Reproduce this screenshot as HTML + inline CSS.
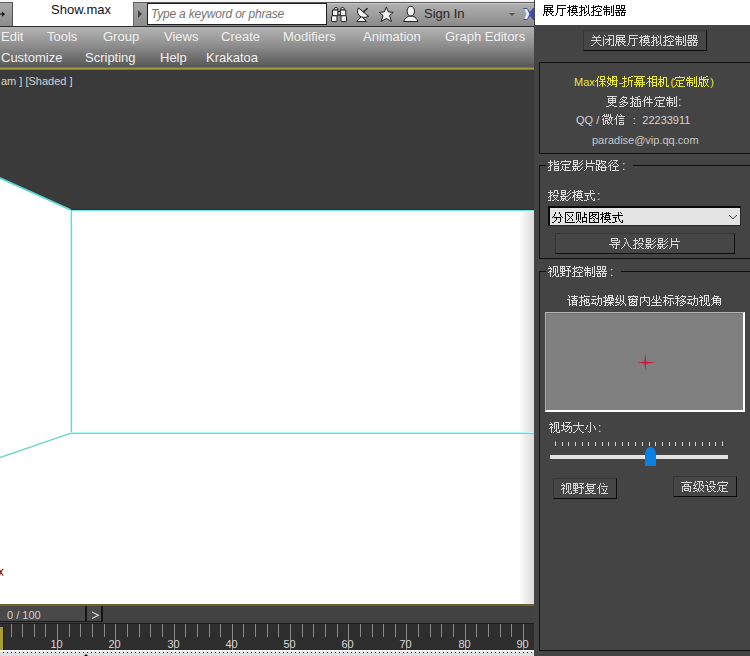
<!DOCTYPE html>
<html><head><meta charset="utf-8">
<style>
*{margin:0;padding:0;box-sizing:border-box}
html,body{width:750px;height:656px;overflow:hidden;background:#444;font-family:"Liberation Sans",sans-serif}
.a{position:absolute}
.mi{position:absolute;color:#f0f0f0;font-size:13px;white-space:nowrap;line-height:15px}
.t{position:absolute;white-space:nowrap;line-height:14px}
.btn{position:absolute;background:#464646;border-top:1px solid #363636;border-left:1px solid #363636;border-right:1px solid #0c0c0c;border-bottom:1px solid #0c0c0c;color:#d8d8d8;font-size:12px;text-align:center;white-space:nowrap}
.grp{position:absolute;border:1px solid #101010;border-right:none}
.gl{position:absolute;background:#444;color:#dedede;font-size:12px;padding:0 8px 0 2px;line-height:14px;white-space:nowrap}
.cj{display:inline-block;vertical-align:-3px;fill:currentColor;shape-rendering:crispEdges}
</style></head><body>
<!-- ===== top bar ===== -->
<div class="a" style="left:0;top:0;width:535px;height:3px;background:#f4f4f4"></div>
<div class="a" style="left:0;top:2px;width:535px;height:24px;background:linear-gradient(#b2b2b2,#8a8a8a);border-top:1px solid #5a5a5a;box-shadow:inset 0 1px 0 #cacaca"></div>
<div class="a" style="left:0;top:26px;width:535px;height:1px;background:#2b2b2b"></div>
<!-- left small button -->
<div class="a" style="left:0;top:2px;width:13px;height:24px;background:linear-gradient(#a8a8a8,#8c8c8c);border-right:1px solid #505050;border-top:1px solid #606060"></div>
<svg class="a" style="left:0;top:11px" width="8" height="8"><path d="M0 3 H2" stroke="#111" stroke-width="1.2"/><path d="M2 0.6 L5 3.2 L2 5.8 Z" fill="#111"/></svg>
<!-- tab -->
<div class="a" style="left:13px;top:0;width:120px;height:26px;background:#fff"></div>
<div class="t" style="left:51px;top:3px;font-size:13px;color:#111">Show.max</div>
<div class="a" style="left:133px;top:2px;width:14px;height:24px;background:linear-gradient(#a4a4a4,#8c8c8c);border-left:1px solid #6a6a6a;border-top:1px solid #5a5a5a"></div>
<div class="a" style="left:138px;top:10px;width:0;height:0;border-left:4px solid #444;border-top:4px solid transparent;border-bottom:4px solid transparent"></div>
<!-- search -->
<div class="a" style="left:147px;top:3px;width:180px;height:22px;background:#fff;border:1px solid #1e1e1e"></div>
<div class="t" style="left:151px;top:7px;font-size:12px;font-style:italic;color:#747474;letter-spacing:-0.2px">Type a keyword or phrase</div>
<!-- icons -->
<svg class="a" style="left:330px;top:5px" width="92" height="18" viewBox="0 0 92 18">
 <g fill="#f2f2f2" stroke="#1e1e1e" stroke-width="1" stroke-linejoin="round">
  <path d="M4.3 5 L4.3 3.2 Q6 1.6 7.7 3.2 L7.7 5 Z"/>
  <path d="M10.8 5 L10.8 3.2 Q12.5 1.6 14.2 3.2 L14.2 5 Z"/>
  <rect x="2.5" y="5" width="5.5" height="5.8"/>
  <rect x="10.3" y="5" width="5.5" height="5.8"/>
  <rect x="8" y="6.5" width="2.3" height="3.5"/>
  <rect x="1.5" y="10.8" width="5.5" height="5.8" rx="0.6"/>
  <rect x="11" y="10.8" width="5.5" height="5.8" rx="0.6"/>
  <path d="M26.8 16.6 L31.6 11.2 L36.6 16.6 Z"/>
  <path d="M28.6 3 C25 8.5 30.5 15 38.6 11.4 Z"/>
  <line x1="33" y1="7.3" x2="37.6" y2="3.2" stroke-width="1.3"/>
  <path d="M56.3 1.9 L58.3 6.9 L63.3 7.3 L59.5 10.6 L61.5 16.5 L56.3 13.4 L51.1 16.5 L53.1 10.6 L49.3 7.3 L54.3 6.9 Z"/>
  <ellipse cx="80.8" cy="6.2" rx="3.7" ry="5"/>
  <path d="M73.6 16.5 C74.3 14 76.3 12.3 78.8 11.2 L82.8 11.2 C85.3 12.3 87.3 14 88 16.5 Z"/>
 </g>
</svg>
<div class="t" style="left:424px;top:7px;font-size:13px;color:#262626">Sign In</div>
<div class="a" style="left:509px;top:13px;width:0;height:0;border-top:3px solid #555;border-left:3px solid transparent;border-right:3px solid transparent"></div>
<svg class="a" style="left:523px;top:8px" width="12" height="12" viewBox="0 0 12 12">
 <path d="M0 0 L4 0 L7 4 L10 0 L12 0 L12 12 L10 12 L7 8 L4 12 L0 12 L4 6 Z" fill="#3a4fa8"/>
 <path d="M1 1 L4 1 L6.5 6 L4 11 L1 11 L3.5 6 Z" fill="#e8ecff"/>
</svg>

<!-- ===== menu bar ===== -->
<div class="a" style="left:0;top:27px;width:535px;height:41px;background:linear-gradient(#b4b4b4,#8e8e8e 45%,#545454)">
<span class="mi" style="left:1px;top:2px">Edit</span>
<span class="mi" style="left:47px;top:2px">Tools</span>
<span class="mi" style="left:103px;top:2px">Group</span>
<span class="mi" style="left:164px;top:2px">Views</span>
<span class="mi" style="left:221px;top:2px">Create</span>
<span class="mi" style="left:283px;top:2px">Modifiers</span>
<span class="mi" style="left:363px;top:2px">Animation</span>
<span class="mi" style="left:445px;top:2px">Graph Editors</span>
<span class="mi" style="left:1px;top:23px">Customize</span>
<span class="mi" style="left:85px;top:23px">Scripting</span>
<span class="mi" style="left:160px;top:23px">Help</span>
<span class="mi" style="left:206px;top:23px">Krakatoa</span>
</div>
<div class="a" style="left:0;top:67px;width:535px;height:3px;background:linear-gradient(#6c6430,#a39a3a 45%,#a39a3a 55%,#6e6630)"></div>

<!-- ===== viewport ===== -->
<div class="a" style="left:0;top:70px;width:535px;height:534px;background:#3a3a3a;overflow:hidden">
<svg width="535" height="534" style="position:absolute;left:0;top:0">
<defs><linearGradient id="rg" x1="0" x2="1" y1="0" y2="0"><stop offset="0.97" stop-color="#fff"/><stop offset="1" stop-color="#d8d8d8"/></linearGradient></defs>
<polygon points="0,107.5 71,139.5 535,139.5 535,534 0,534" fill="url(#rg)"/>
<line x1="0" y1="108" x2="71" y2="140" stroke="#50d8d4" stroke-width="1.6"/>
<line x1="0" y1="387.6" x2="71" y2="363.2" stroke="#70d4cc" stroke-width="1.4"/>
<rect x="71" y="139" width="464" height="1" fill="#243232"/>
<rect x="71" y="140" width="464" height="1" fill="#7ae6e4"/>
<rect x="71" y="141" width="464" height="1" fill="#c6fcfc"/>
<rect x="70" y="140" width="1" height="223" fill="#b4fcfc"/>
<rect x="71" y="140" width="1" height="224" fill="#70d2ca"/>
<rect x="71" y="362" width="464" height="1" fill="#b4fcfc"/>
<rect x="71" y="363" width="464" height="1" fill="#70d2ca"/>
</svg>
<div class="t" style="left:1px;top:4px;font-size:11px;color:#d4d4d4">am ] [Shaded ]</div>
<svg class="a" style="left:0;top:498px" width="5" height="9"><path d="M3.2 0.8 L0.8 4.2 L3.2 7.6 M0 2 L0.8 4.2 L0 6.4" fill="none" stroke="#9a1a1a" stroke-width="1.1"/></svg>
</div>

<!-- ===== timeline ===== -->
<div class="a" style="left:0;top:604px;width:535px;height:2px;background:#6a6228"></div>
<div class="a" style="left:0;top:606px;width:535px;height:18px;background:#424242"></div><div class="a" style="left:0;top:623px;width:535px;height:1px;background:#1c1c1c"></div>
<div class="a" style="left:0;top:606px;width:87px;height:16px;background:#494949;border-right:2px solid #151515;border-bottom:1px solid #151515"></div>
<div class="t" style="left:7px;top:608px;font-size:11px;color:#d0d0d0">0 / 100</div>
<div class="a" style="left:87px;top:606px;width:16px;height:16px;background:#4a4a4a;border-right:2px solid #151515;border-bottom:1px solid #151515"></div>
<svg class="a" style="left:91px;top:611px" width="9" height="9"><path d="M1 1 L7.5 4.2 L1 7.5" fill="none" stroke="#d8d8d8" stroke-width="1.1"/></svg>
<div class="a" style="left:0;top:624px;width:535px;height:26px;background:#2e2e2e"></div>
<div class="a" style="left:0;top:627px;width:3px;height:23px;background:#a89b32"></div><div class="a" style="left:3px;top:627px;width:1px;height:23px;background:#1a1a1a"></div>
<svg class="a" style="left:0;top:624px" width="535" height="27"><line x1="11.5" y1="0" x2="11.5" y2="13" stroke="#8a8a8a" stroke-width="1"/><line x1="22.5" y1="0" x2="22.5" y2="13" stroke="#8a8a8a" stroke-width="1"/><line x1="34.5" y1="0" x2="34.5" y2="13" stroke="#8a8a8a" stroke-width="1"/><line x1="45.5" y1="0" x2="45.5" y2="13" stroke="#8a8a8a" stroke-width="1"/><line x1="57.5" y1="0" x2="57.5" y2="27" stroke="#8a8a8a" stroke-width="1"/><text x="56.5" y="24" font-size="11" fill="#d8d8d8" text-anchor="middle" font-family="Liberation Sans">10</text><line x1="69.5" y1="0" x2="69.5" y2="13" stroke="#8a8a8a" stroke-width="1"/><line x1="80.5" y1="0" x2="80.5" y2="13" stroke="#8a8a8a" stroke-width="1"/><line x1="92.5" y1="0" x2="92.5" y2="13" stroke="#8a8a8a" stroke-width="1"/><line x1="104.5" y1="0" x2="104.5" y2="13" stroke="#8a8a8a" stroke-width="1"/><line x1="115.5" y1="0" x2="115.5" y2="27" stroke="#8a8a8a" stroke-width="1"/><text x="114.5" y="24" font-size="11" fill="#d8d8d8" text-anchor="middle" font-family="Liberation Sans">20</text><line x1="127.5" y1="0" x2="127.5" y2="13" stroke="#8a8a8a" stroke-width="1"/><line x1="139.5" y1="0" x2="139.5" y2="13" stroke="#8a8a8a" stroke-width="1"/><line x1="150.5" y1="0" x2="150.5" y2="13" stroke="#8a8a8a" stroke-width="1"/><line x1="162.5" y1="0" x2="162.5" y2="13" stroke="#8a8a8a" stroke-width="1"/><line x1="174.5" y1="0" x2="174.5" y2="27" stroke="#8a8a8a" stroke-width="1"/><text x="173.5" y="24" font-size="11" fill="#d8d8d8" text-anchor="middle" font-family="Liberation Sans">30</text><line x1="185.5" y1="0" x2="185.5" y2="13" stroke="#8a8a8a" stroke-width="1"/><line x1="197.5" y1="0" x2="197.5" y2="13" stroke="#8a8a8a" stroke-width="1"/><line x1="209.5" y1="0" x2="209.5" y2="13" stroke="#8a8a8a" stroke-width="1"/><line x1="220.5" y1="0" x2="220.5" y2="13" stroke="#8a8a8a" stroke-width="1"/><line x1="232.5" y1="0" x2="232.5" y2="27" stroke="#8a8a8a" stroke-width="1"/><text x="231.5" y="24" font-size="11" fill="#d8d8d8" text-anchor="middle" font-family="Liberation Sans">40</text><line x1="243.5" y1="0" x2="243.5" y2="13" stroke="#8a8a8a" stroke-width="1"/><line x1="255.5" y1="0" x2="255.5" y2="13" stroke="#8a8a8a" stroke-width="1"/><line x1="267.5" y1="0" x2="267.5" y2="13" stroke="#8a8a8a" stroke-width="1"/><line x1="278.5" y1="0" x2="278.5" y2="13" stroke="#8a8a8a" stroke-width="1"/><line x1="290.5" y1="0" x2="290.5" y2="27" stroke="#8a8a8a" stroke-width="1"/><text x="289.5" y="24" font-size="11" fill="#d8d8d8" text-anchor="middle" font-family="Liberation Sans">50</text><line x1="302.5" y1="0" x2="302.5" y2="13" stroke="#8a8a8a" stroke-width="1"/><line x1="313.5" y1="0" x2="313.5" y2="13" stroke="#8a8a8a" stroke-width="1"/><line x1="325.5" y1="0" x2="325.5" y2="13" stroke="#8a8a8a" stroke-width="1"/><line x1="337.5" y1="0" x2="337.5" y2="13" stroke="#8a8a8a" stroke-width="1"/><line x1="348.5" y1="0" x2="348.5" y2="27" stroke="#8a8a8a" stroke-width="1"/><text x="347.5" y="24" font-size="11" fill="#d8d8d8" text-anchor="middle" font-family="Liberation Sans">60</text><line x1="360.5" y1="0" x2="360.5" y2="13" stroke="#8a8a8a" stroke-width="1"/><line x1="372.5" y1="0" x2="372.5" y2="13" stroke="#8a8a8a" stroke-width="1"/><line x1="383.5" y1="0" x2="383.5" y2="13" stroke="#8a8a8a" stroke-width="1"/><line x1="395.5" y1="0" x2="395.5" y2="13" stroke="#8a8a8a" stroke-width="1"/><line x1="406.5" y1="0" x2="406.5" y2="27" stroke="#8a8a8a" stroke-width="1"/><text x="405.5" y="24" font-size="11" fill="#d8d8d8" text-anchor="middle" font-family="Liberation Sans">70</text><line x1="418.5" y1="0" x2="418.5" y2="13" stroke="#8a8a8a" stroke-width="1"/><line x1="430.5" y1="0" x2="430.5" y2="13" stroke="#8a8a8a" stroke-width="1"/><line x1="441.5" y1="0" x2="441.5" y2="13" stroke="#8a8a8a" stroke-width="1"/><line x1="453.5" y1="0" x2="453.5" y2="13" stroke="#8a8a8a" stroke-width="1"/><line x1="465.5" y1="0" x2="465.5" y2="27" stroke="#8a8a8a" stroke-width="1"/><text x="464.5" y="24" font-size="11" fill="#d8d8d8" text-anchor="middle" font-family="Liberation Sans">80</text><line x1="476.5" y1="0" x2="476.5" y2="13" stroke="#8a8a8a" stroke-width="1"/><line x1="488.5" y1="0" x2="488.5" y2="13" stroke="#8a8a8a" stroke-width="1"/><line x1="500.5" y1="0" x2="500.5" y2="13" stroke="#8a8a8a" stroke-width="1"/><line x1="511.5" y1="0" x2="511.5" y2="13" stroke="#8a8a8a" stroke-width="1"/><line x1="523.5" y1="0" x2="523.5" y2="27" stroke="#8a8a8a" stroke-width="1"/><text x="522.5" y="24" font-size="11" fill="#d8d8d8" text-anchor="middle" font-family="Liberation Sans">90</text><line x1="535.5" y1="0" x2="535.5" y2="13" stroke="#8a8a8a" stroke-width="1"/></svg>
<div class="a" style="left:0;top:650px;width:535px;height:6px;background:#dedede"></div>
<div class="a" style="left:0;top:650px;width:535px;height:2px;background:#f4f4f4"></div>
<div class="a" style="left:3px;top:652px;width:532px;height:1px;background:repeating-linear-gradient(90deg,#222 0 1px,transparent 1px 4px)"></div>

<div class="a" style="left:84px;top:654px;width:0;height:0;border-bottom:2px solid #111;border-left:2px solid transparent;border-right:2px solid transparent"></div>
<!-- ===== right panel ===== -->
<div class="a" style="left:534px;top:0;width:216px;height:656px;background:#444444">
<div class="a" style="left:1px;top:0;width:215px;height:25px;background:#fff"></div>
<div class="t" style="left:9px;top:4px;font-size:12px;color:#111"><svg class="cj" width="84" height="13"><path d="M1 0h9v1h-9zM1 1h1v1h-1zM9 1h1v1h-1zM1 2h9v1h-9zM1 3h1v1h-1zM4 3h1v1h-1zM7 3h1v1h-1zM1 4h9v1h-9zM1 5h1v1h-1zM4 5h1v1h-1zM7 5h1v1h-1zM1 6h10v1h-10zM1 7h1v1h-1zM3 7h1v1h-1zM6 7h1v1h-1zM9 7h1v1h-1zM1 8h1v1h-1zM3 8h1v1h-1zM7 8h2v1h-2zM0 9h1v1h-1zM3 9h1v1h-1zM5 9h1v1h-1zM8 9h1v1h-1zM0 10h1v1h-1zM3 10h2v1h-2zM9 10h2v1h-2zM14 0h9v1h-9zM14 1h1v1h-1zM14 2h1v1h-1zM14 3h9v1h-9zM14 4h1v1h-1zM19 4h1v1h-1zM14 5h1v1h-1zM19 5h1v1h-1zM14 6h1v1h-1zM19 6h1v1h-1zM14 7h1v1h-1zM19 7h1v1h-1zM13 8h1v1h-1zM19 8h1v1h-1zM13 9h1v1h-1zM19 9h1v1h-1zM12 10h1v1h-1zM17 10h3v1h-3zM26 0h1v1h-1zM30 0h1v1h-1zM32 0h1v1h-1zM26 1h1v1h-1zM28 1h7v1h-7zM24 2h4v1h-4zM30 2h1v1h-1zM32 2h1v1h-1zM26 3h1v1h-1zM29 3h5v1h-5zM26 4h2v1h-2zM29 4h1v1h-1zM33 4h1v1h-1zM25 5h2v1h-2zM28 5h6v1h-6zM25 6h2v1h-2zM29 6h1v1h-1zM33 6h1v1h-1zM24 7h1v1h-1zM26 7h1v1h-1zM28 7h7v1h-7zM26 8h1v1h-1zM31 8h1v1h-1zM26 9h1v1h-1zM30 9h1v1h-1zM32 9h1v1h-1zM26 10h1v1h-1zM28 10h2v1h-2zM33 10h2v1h-2zM38 0h1v1h-1zM42 0h1v1h-1zM45 0h1v1h-1zM38 1h1v1h-1zM43 1h1v1h-1zM45 1h1v1h-1zM36 2h6v1h-6zM43 2h1v1h-1zM45 2h1v1h-1zM38 3h1v1h-1zM41 3h1v1h-1zM45 3h1v1h-1zM38 4h1v1h-1zM40 4h2v1h-2zM45 4h1v1h-1zM38 5h2v1h-2zM41 5h1v1h-1zM45 5h1v1h-1zM37 6h2v1h-2zM41 6h1v1h-1zM43 6h1v1h-1zM45 6h1v1h-1zM36 7h1v1h-1zM38 7h1v1h-1zM41 7h2v1h-2zM45 7h1v1h-1zM38 8h1v1h-1zM41 8h1v1h-1zM44 8h2v1h-2zM38 9h1v1h-1zM43 9h1v1h-1zM46 9h1v1h-1zM36 10h3v1h-3zM41 10h2v1h-2zM46 10h1v1h-1zM50 0h1v1h-1zM55 0h1v1h-1zM50 1h1v1h-1zM52 1h7v1h-7zM48 2h5v1h-5zM58 2h1v1h-1zM50 3h1v1h-1zM54 3h1v1h-1zM56 3h1v1h-1zM50 4h1v1h-1zM53 4h1v1h-1zM57 4h1v1h-1zM50 5h3v1h-3zM58 5h1v1h-1zM49 6h2v1h-2zM53 6h5v1h-5zM48 7h1v1h-1zM50 7h1v1h-1zM55 7h1v1h-1zM50 8h1v1h-1zM55 8h1v1h-1zM50 9h1v1h-1zM55 9h1v1h-1zM48 10h3v1h-3zM52 10h7v1h-7zM63 0h1v1h-1zM70 0h1v1h-1zM61 1h1v1h-1zM63 1h1v1h-1zM68 1h1v1h-1zM70 1h1v1h-1zM61 2h6v1h-6zM68 2h1v1h-1zM70 2h1v1h-1zM60 3h1v1h-1zM63 3h1v1h-1zM68 3h1v1h-1zM70 3h1v1h-1zM60 4h7v1h-7zM68 4h1v1h-1zM70 4h1v1h-1zM63 5h1v1h-1zM68 5h1v1h-1zM70 5h1v1h-1zM61 6h6v1h-6zM68 6h1v1h-1zM70 6h1v1h-1zM61 7h1v1h-1zM63 7h1v1h-1zM66 7h1v1h-1zM68 7h1v1h-1zM70 7h1v1h-1zM61 8h1v1h-1zM63 8h1v1h-1zM66 8h1v1h-1zM70 8h1v1h-1zM61 9h1v1h-1zM63 9h1v1h-1zM65 9h2v1h-2zM70 9h1v1h-1zM63 10h1v1h-1zM68 10h3v1h-3zM73 0h4v1h-4zM78 0h4v1h-4zM73 1h1v1h-1zM76 1h1v1h-1zM78 1h1v1h-1zM81 1h1v1h-1zM73 2h1v1h-1zM76 2h1v1h-1zM78 2h1v1h-1zM81 2h1v1h-1zM73 3h4v1h-4zM78 3h4v1h-4zM77 4h1v1h-1zM80 4h1v1h-1zM72 5h11v1h-11zM75 6h1v1h-1zM79 6h1v1h-1zM72 7h5v1h-5zM78 7h5v1h-5zM73 8h1v1h-1zM76 8h1v1h-1zM78 8h1v1h-1zM81 8h1v1h-1zM73 9h1v1h-1zM76 9h1v1h-1zM78 9h1v1h-1zM81 9h1v1h-1zM73 10h4v1h-4zM78 10h4v1h-4z"/></svg></div>
</div>
<div class="btn" style="left:583px;top:30px;width:124px;height:21px;line-height:20px"><svg class="cj" width="108" height="13"><path d="M2 0h1v1h-1zM8 0h1v1h-1zM3 1h1v1h-1zM7 1h1v1h-1zM1 2h9v1h-9zM5 3h1v1h-1zM5 4h1v1h-1zM0 5h10v1h-10zM5 6h1v1h-1zM4 7h1v1h-1zM6 7h1v1h-1zM3 8h1v1h-1zM7 8h1v1h-1zM2 9h1v1h-1zM8 9h1v1h-1zM0 10h2v1h-2zM9 10h2v1h-2zM13 0h1v1h-1zM17 0h6v1h-6zM14 1h1v1h-1zM22 1h1v1h-1zM12 2h1v1h-1zM18 2h1v1h-1zM22 2h1v1h-1zM12 3h1v1h-1zM18 3h1v1h-1zM22 3h1v1h-1zM12 4h1v1h-1zM14 4h7v1h-7zM22 4h1v1h-1zM12 5h1v1h-1zM17 5h2v1h-2zM22 5h1v1h-1zM12 6h1v1h-1zM16 6h1v1h-1zM18 6h1v1h-1zM22 6h1v1h-1zM12 7h1v1h-1zM15 7h1v1h-1zM18 7h1v1h-1zM22 7h1v1h-1zM12 8h1v1h-1zM14 8h1v1h-1zM18 8h1v1h-1zM22 8h1v1h-1zM12 9h1v1h-1zM17 9h2v1h-2zM22 9h1v1h-1zM12 10h1v1h-1zM20 10h3v1h-3zM25 0h9v1h-9zM25 1h1v1h-1zM33 1h1v1h-1zM25 2h9v1h-9zM25 3h1v1h-1zM28 3h1v1h-1zM31 3h1v1h-1zM25 4h9v1h-9zM25 5h1v1h-1zM28 5h1v1h-1zM31 5h1v1h-1zM25 6h10v1h-10zM25 7h1v1h-1zM27 7h1v1h-1zM30 7h1v1h-1zM33 7h1v1h-1zM25 8h1v1h-1zM27 8h1v1h-1zM31 8h2v1h-2zM24 9h1v1h-1zM27 9h1v1h-1zM29 9h1v1h-1zM32 9h1v1h-1zM24 10h1v1h-1zM27 10h2v1h-2zM33 10h2v1h-2zM38 0h9v1h-9zM38 1h1v1h-1zM38 2h1v1h-1zM38 3h9v1h-9zM38 4h1v1h-1zM43 4h1v1h-1zM38 5h1v1h-1zM43 5h1v1h-1zM38 6h1v1h-1zM43 6h1v1h-1zM38 7h1v1h-1zM43 7h1v1h-1zM37 8h1v1h-1zM43 8h1v1h-1zM37 9h1v1h-1zM43 9h1v1h-1zM36 10h1v1h-1zM41 10h3v1h-3zM50 0h1v1h-1zM54 0h1v1h-1zM56 0h1v1h-1zM50 1h1v1h-1zM52 1h7v1h-7zM48 2h4v1h-4zM54 2h1v1h-1zM56 2h1v1h-1zM50 3h1v1h-1zM53 3h5v1h-5zM50 4h2v1h-2zM53 4h1v1h-1zM57 4h1v1h-1zM49 5h2v1h-2zM52 5h6v1h-6zM49 6h2v1h-2zM53 6h1v1h-1zM57 6h1v1h-1zM48 7h1v1h-1zM50 7h1v1h-1zM52 7h7v1h-7zM50 8h1v1h-1zM55 8h1v1h-1zM50 9h1v1h-1zM54 9h1v1h-1zM56 9h1v1h-1zM50 10h1v1h-1zM52 10h2v1h-2zM57 10h2v1h-2zM62 0h1v1h-1zM66 0h1v1h-1zM69 0h1v1h-1zM62 1h1v1h-1zM67 1h1v1h-1zM69 1h1v1h-1zM60 2h6v1h-6zM67 2h1v1h-1zM69 2h1v1h-1zM62 3h1v1h-1zM65 3h1v1h-1zM69 3h1v1h-1zM62 4h1v1h-1zM64 4h2v1h-2zM69 4h1v1h-1zM62 5h2v1h-2zM65 5h1v1h-1zM69 5h1v1h-1zM61 6h2v1h-2zM65 6h1v1h-1zM67 6h1v1h-1zM69 6h1v1h-1zM60 7h1v1h-1zM62 7h1v1h-1zM65 7h2v1h-2zM69 7h1v1h-1zM62 8h1v1h-1zM65 8h1v1h-1zM68 8h2v1h-2zM62 9h1v1h-1zM67 9h1v1h-1zM70 9h1v1h-1zM60 10h3v1h-3zM65 10h2v1h-2zM70 10h1v1h-1zM74 0h1v1h-1zM79 0h1v1h-1zM74 1h1v1h-1zM76 1h7v1h-7zM72 2h5v1h-5zM82 2h1v1h-1zM74 3h1v1h-1zM78 3h1v1h-1zM80 3h1v1h-1zM74 4h1v1h-1zM77 4h1v1h-1zM81 4h1v1h-1zM74 5h3v1h-3zM82 5h1v1h-1zM73 6h2v1h-2zM77 6h5v1h-5zM72 7h1v1h-1zM74 7h1v1h-1zM79 7h1v1h-1zM74 8h1v1h-1zM79 8h1v1h-1zM74 9h1v1h-1zM79 9h1v1h-1zM72 10h3v1h-3zM76 10h7v1h-7zM87 0h1v1h-1zM94 0h1v1h-1zM85 1h1v1h-1zM87 1h1v1h-1zM92 1h1v1h-1zM94 1h1v1h-1zM85 2h6v1h-6zM92 2h1v1h-1zM94 2h1v1h-1zM84 3h1v1h-1zM87 3h1v1h-1zM92 3h1v1h-1zM94 3h1v1h-1zM84 4h7v1h-7zM92 4h1v1h-1zM94 4h1v1h-1zM87 5h1v1h-1zM92 5h1v1h-1zM94 5h1v1h-1zM85 6h6v1h-6zM92 6h1v1h-1zM94 6h1v1h-1zM85 7h1v1h-1zM87 7h1v1h-1zM90 7h1v1h-1zM92 7h1v1h-1zM94 7h1v1h-1zM85 8h1v1h-1zM87 8h1v1h-1zM90 8h1v1h-1zM94 8h1v1h-1zM85 9h1v1h-1zM87 9h1v1h-1zM89 9h2v1h-2zM94 9h1v1h-1zM87 10h1v1h-1zM92 10h3v1h-3zM97 0h4v1h-4zM102 0h4v1h-4zM97 1h1v1h-1zM100 1h1v1h-1zM102 1h1v1h-1zM105 1h1v1h-1zM97 2h1v1h-1zM100 2h1v1h-1zM102 2h1v1h-1zM105 2h1v1h-1zM97 3h4v1h-4zM102 3h4v1h-4zM101 4h1v1h-1zM104 4h1v1h-1zM96 5h11v1h-11zM99 6h1v1h-1zM103 6h1v1h-1zM96 7h5v1h-5zM102 7h5v1h-5zM97 8h1v1h-1zM100 8h1v1h-1zM102 8h1v1h-1zM105 8h1v1h-1zM97 9h1v1h-1zM100 9h1v1h-1zM102 9h1v1h-1zM105 9h1v1h-1zM97 10h4v1h-4zM102 10h4v1h-4z"/></svg></div>

<div class="grp" style="left:539px;top:62px;width:211px;height:92px"></div>
<div class="t" style="left:574px;top:75px;font-size:11px;color:#e8e83a">Max<svg class="cj" width="24" height="13"><path d="M3 0h1v1h-1zM5 0h5v1h-5zM3 1h1v1h-1zM5 1h1v1h-1zM9 1h1v1h-1zM2 2h1v1h-1zM5 2h1v1h-1zM9 2h1v1h-1zM2 3h1v1h-1zM5 3h5v1h-5zM1 4h2v1h-2zM7 4h1v1h-1zM0 5h1v1h-1zM2 5h1v1h-1zM4 5h7v1h-7zM2 6h1v1h-1zM7 6h1v1h-1zM2 7h1v1h-1zM6 7h3v1h-3zM2 8h1v1h-1zM5 8h1v1h-1zM7 8h1v1h-1zM9 8h1v1h-1zM2 9h1v1h-1zM4 9h1v1h-1zM7 9h1v1h-1zM10 9h1v1h-1zM2 10h1v1h-1zM7 10h1v1h-1zM13 0h1v1h-1zM17 0h5v1h-5zM13 1h1v1h-1zM17 1h2v1h-2zM21 1h1v1h-1zM12 2h4v1h-4zM17 2h1v1h-1zM19 2h1v1h-1zM21 2h1v1h-1zM13 3h1v1h-1zM15 3h1v1h-1zM17 3h1v1h-1zM21 3h1v1h-1zM13 4h1v1h-1zM15 4h8v1h-8zM12 5h1v1h-1zM15 5h1v1h-1zM17 5h2v1h-2zM21 5h1v1h-1zM12 6h1v1h-1zM15 6h1v1h-1zM17 6h1v1h-1zM19 6h1v1h-1zM21 6h1v1h-1zM13 7h2v1h-2zM17 7h1v1h-1zM21 7h1v1h-1zM14 8h2v1h-2zM17 8h5v1h-5zM13 9h1v1h-1zM16 9h1v1h-1zM21 9h1v1h-1zM12 10h1v1h-1zM20 10h2v1h-2z"/></svg>-<svg class="cj" width="48" height="13"><path d="M2 0h1v1h-1zM9 0h2v1h-2zM2 1h1v1h-1zM6 1h3v1h-3zM0 2h5v1h-5zM6 2h1v1h-1zM2 3h1v1h-1zM6 3h1v1h-1zM2 4h1v1h-1zM6 4h5v1h-5zM2 5h3v1h-3zM6 5h1v1h-1zM9 5h1v1h-1zM1 6h2v1h-2zM6 6h1v1h-1zM9 6h1v1h-1zM0 7h1v1h-1zM2 7h1v1h-1zM6 7h1v1h-1zM9 7h1v1h-1zM2 8h1v1h-1zM6 8h1v1h-1zM9 8h1v1h-1zM2 9h1v1h-1zM5 9h1v1h-1zM9 9h1v1h-1zM0 10h3v1h-3zM4 10h1v1h-1zM9 10h1v1h-1zM12 0h11v1h-11zM15 1h1v1h-1zM19 1h1v1h-1zM14 2h7v1h-7zM14 3h1v1h-1zM20 3h1v1h-1zM14 4h7v1h-7zM14 5h1v1h-1zM16 5h1v1h-1zM20 5h1v1h-1zM12 6h11v1h-11zM15 7h1v1h-1zM17 7h1v1h-1zM20 7h1v1h-1zM12 8h11v1h-11zM14 9h1v1h-1zM17 9h1v1h-1zM20 9h1v1h-1zM14 10h1v1h-1zM17 10h1v1h-1zM19 10h2v1h-2zM27 0h1v1h-1zM30 0h5v1h-5zM27 1h1v1h-1zM30 1h1v1h-1zM34 1h1v1h-1zM25 2h6v1h-6zM34 2h1v1h-1zM27 3h1v1h-1zM30 3h5v1h-5zM27 4h1v1h-1zM30 4h1v1h-1zM34 4h1v1h-1zM26 5h3v1h-3zM30 5h1v1h-1zM34 5h1v1h-1zM25 6h1v1h-1zM27 6h1v1h-1zM29 6h6v1h-6zM24 7h1v1h-1zM27 7h1v1h-1zM30 7h1v1h-1zM34 7h1v1h-1zM27 8h1v1h-1zM30 8h1v1h-1zM34 8h1v1h-1zM27 9h1v1h-1zM30 9h5v1h-5zM27 10h1v1h-1zM30 10h1v1h-1zM34 10h1v1h-1zM38 0h1v1h-1zM38 1h1v1h-1zM41 1h4v1h-4zM38 2h1v1h-1zM41 2h1v1h-1zM44 2h1v1h-1zM36 3h6v1h-6zM44 3h1v1h-1zM38 4h1v1h-1zM41 4h1v1h-1zM44 4h1v1h-1zM37 5h3v1h-3zM41 5h1v1h-1zM44 5h1v1h-1zM37 6h2v1h-2zM40 6h2v1h-2zM44 6h1v1h-1zM36 7h1v1h-1zM38 7h1v1h-1zM41 7h1v1h-1zM44 7h1v1h-1zM36 8h1v1h-1zM38 8h1v1h-1zM41 8h1v1h-1zM44 8h1v1h-1zM38 9h1v1h-1zM40 9h1v1h-1zM44 9h1v1h-1zM46 9h1v1h-1zM38 10h2v1h-2zM44 10h3v1h-3z"/></svg>(<svg class="cj" width="36" height="13"><path d="M5 0h1v1h-1zM1 1h10v1h-10zM1 2h1v1h-1zM10 2h1v1h-1zM0 3h1v1h-1zM9 3h1v1h-1zM2 4h8v1h-8zM5 5h1v1h-1zM2 6h1v1h-1zM5 6h1v1h-1zM2 7h1v1h-1zM5 7h4v1h-4zM2 8h1v1h-1zM5 8h1v1h-1zM1 9h1v1h-1zM3 9h1v1h-1zM5 9h1v1h-1zM0 10h1v1h-1zM4 10h7v1h-7zM15 0h1v1h-1zM22 0h1v1h-1zM13 1h1v1h-1zM15 1h1v1h-1zM20 1h1v1h-1zM22 1h1v1h-1zM13 2h6v1h-6zM20 2h1v1h-1zM22 2h1v1h-1zM12 3h1v1h-1zM15 3h1v1h-1zM20 3h1v1h-1zM22 3h1v1h-1zM12 4h7v1h-7zM20 4h1v1h-1zM22 4h1v1h-1zM15 5h1v1h-1zM20 5h1v1h-1zM22 5h1v1h-1zM13 6h6v1h-6zM20 6h1v1h-1zM22 6h1v1h-1zM13 7h1v1h-1zM15 7h1v1h-1zM18 7h1v1h-1zM20 7h1v1h-1zM22 7h1v1h-1zM13 8h1v1h-1zM15 8h1v1h-1zM18 8h1v1h-1zM22 8h1v1h-1zM13 9h1v1h-1zM15 9h1v1h-1zM17 9h2v1h-2zM22 9h1v1h-1zM15 10h1v1h-1zM20 10h3v1h-3zM27 0h1v1h-1zM32 0h2v1h-2zM25 1h1v1h-1zM27 1h1v1h-1zM29 1h3v1h-3zM25 2h1v1h-1zM27 2h1v1h-1zM29 2h1v1h-1zM25 3h10v1h-10zM25 4h1v1h-1zM29 4h2v1h-2zM33 4h1v1h-1zM25 5h1v1h-1zM29 5h1v1h-1zM31 5h1v1h-1zM33 5h1v1h-1zM25 6h3v1h-3zM29 6h1v1h-1zM31 6h1v1h-1zM33 6h1v1h-1zM25 7h1v1h-1zM27 7h1v1h-1zM29 7h1v1h-1zM32 7h1v1h-1zM25 8h1v1h-1zM27 8h1v1h-1zM29 8h1v1h-1zM32 8h1v1h-1zM24 9h1v1h-1zM27 9h1v1h-1zM29 9h1v1h-1zM31 9h1v1h-1zM33 9h1v1h-1zM24 10h1v1h-1zM27 10h2v1h-2zM30 10h1v1h-1zM34 10h1v1h-1z"/></svg>)</div>
<div class="t" style="left:606px;top:95px;font-size:12px;color:#dadada"><svg class="cj" width="72" height="13"><path d="M1 0h10v1h-10zM6 1h1v1h-1zM2 2h8v1h-8zM2 3h1v1h-1zM6 3h1v1h-1zM9 3h1v1h-1zM2 4h8v1h-8zM2 5h1v1h-1zM6 5h1v1h-1zM9 5h1v1h-1zM2 6h8v1h-8zM4 7h1v1h-1zM6 7h1v1h-1zM5 8h1v1h-1zM3 9h2v1h-2zM6 9h2v1h-2zM0 10h3v1h-3zM8 10h3v1h-3zM17 0h1v1h-1zM16 1h5v1h-5zM15 2h1v1h-1zM20 2h1v1h-1zM14 3h1v1h-1zM16 3h1v1h-1zM19 3h1v1h-1zM17 4h2v1h-2zM15 5h2v1h-2zM18 5h1v1h-1zM13 6h2v1h-2zM17 6h5v1h-5zM16 7h1v1h-1zM21 7h1v1h-1zM14 8h2v1h-2zM17 8h1v1h-1zM20 8h1v1h-1zM18 9h2v1h-2zM13 10h5v1h-5zM26 0h1v1h-1zM32 0h2v1h-2zM26 1h1v1h-1zM29 1h3v1h-3zM24 2h4v1h-4zM31 2h1v1h-1zM26 3h1v1h-1zM28 3h7v1h-7zM26 4h1v1h-1zM31 4h1v1h-1zM26 5h2v1h-2zM29 5h1v1h-1zM31 5h1v1h-1zM33 5h2v1h-2zM25 6h2v1h-2zM28 6h1v1h-1zM31 6h1v1h-1zM34 6h1v1h-1zM24 7h1v1h-1zM26 7h1v1h-1zM28 7h2v1h-2zM31 7h1v1h-1zM33 7h2v1h-2zM26 8h1v1h-1zM28 8h1v1h-1zM31 8h1v1h-1zM34 8h1v1h-1zM26 9h1v1h-1zM28 9h1v1h-1zM31 9h1v1h-1zM34 9h1v1h-1zM24 10h3v1h-3zM28 10h7v1h-7zM39 0h1v1h-1zM43 0h1v1h-1zM39 1h1v1h-1zM41 1h1v1h-1zM43 1h1v1h-1zM38 2h1v1h-1zM41 2h1v1h-1zM43 2h1v1h-1zM38 3h1v1h-1zM40 3h6v1h-6zM37 4h3v1h-3zM43 4h1v1h-1zM36 5h1v1h-1zM38 5h1v1h-1zM43 5h1v1h-1zM38 6h1v1h-1zM40 6h7v1h-7zM38 7h1v1h-1zM43 7h1v1h-1zM38 8h1v1h-1zM43 8h1v1h-1zM38 9h1v1h-1zM43 9h1v1h-1zM38 10h1v1h-1zM43 10h1v1h-1zM53 0h1v1h-1zM49 1h10v1h-10zM49 2h1v1h-1zM58 2h1v1h-1zM48 3h1v1h-1zM57 3h1v1h-1zM50 4h8v1h-8zM53 5h1v1h-1zM50 6h1v1h-1zM53 6h1v1h-1zM50 7h1v1h-1zM53 7h4v1h-4zM50 8h1v1h-1zM53 8h1v1h-1zM49 9h1v1h-1zM51 9h1v1h-1zM53 9h1v1h-1zM48 10h1v1h-1zM52 10h7v1h-7zM63 0h1v1h-1zM70 0h1v1h-1zM61 1h1v1h-1zM63 1h1v1h-1zM68 1h1v1h-1zM70 1h1v1h-1zM61 2h6v1h-6zM68 2h1v1h-1zM70 2h1v1h-1zM60 3h1v1h-1zM63 3h1v1h-1zM68 3h1v1h-1zM70 3h1v1h-1zM60 4h7v1h-7zM68 4h1v1h-1zM70 4h1v1h-1zM63 5h1v1h-1zM68 5h1v1h-1zM70 5h1v1h-1zM61 6h6v1h-6zM68 6h1v1h-1zM70 6h1v1h-1zM61 7h1v1h-1zM63 7h1v1h-1zM66 7h1v1h-1zM68 7h1v1h-1zM70 7h1v1h-1zM61 8h1v1h-1zM63 8h1v1h-1zM66 8h1v1h-1zM70 8h1v1h-1zM61 9h1v1h-1zM63 9h1v1h-1zM65 9h2v1h-2zM70 9h1v1h-1zM63 10h1v1h-1zM68 10h3v1h-3z"/></svg>:</div>
<div class="t" style="left:576px;top:113px;font-size:11px;color:#d4d4d4">QQ / <svg class="cj" width="24" height="13"><path d="M2 0h1v1h-1zM4 0h1v1h-1zM6 0h1v1h-1zM8 0h1v1h-1zM1 1h2v1h-2zM4 1h1v1h-1zM6 1h1v1h-1zM8 1h1v1h-1zM0 2h1v1h-1zM2 2h5v1h-5zM8 2h1v1h-1zM7 3h4v1h-4zM1 4h1v1h-1zM3 4h3v1h-3zM7 4h1v1h-1zM9 4h1v1h-1zM0 5h2v1h-2zM6 5h2v1h-2zM9 5h1v1h-1zM1 6h1v1h-1zM3 6h3v1h-3zM7 6h1v1h-1zM9 6h1v1h-1zM1 7h1v1h-1zM3 7h1v1h-1zM5 7h1v1h-1zM8 7h1v1h-1zM1 8h1v1h-1zM3 8h1v1h-1zM5 8h2v1h-2zM8 8h1v1h-1zM1 9h1v1h-1zM3 9h1v1h-1zM5 9h1v1h-1zM7 9h1v1h-1zM9 9h1v1h-1zM1 10h2v1h-2zM6 10h1v1h-1zM10 10h1v1h-1zM15 0h1v1h-1zM18 0h1v1h-1zM15 1h1v1h-1zM19 1h1v1h-1zM14 2h1v1h-1zM16 2h7v1h-7zM14 3h1v1h-1zM13 4h2v1h-2zM17 4h5v1h-5zM12 5h1v1h-1zM14 5h1v1h-1zM14 6h1v1h-1zM17 6h5v1h-5zM14 7h1v1h-1zM14 8h1v1h-1zM17 8h5v1h-5zM14 9h1v1h-1zM17 9h1v1h-1zM21 9h1v1h-1zM14 10h1v1h-1zM17 10h5v1h-5z"/></svg><span style="display:inline-block;width:16px;text-align:center">:</span>22233911</div>
<div class="t" style="left:592px;top:133px;font-size:11px;color:#c8c8c8">paradise@vip.qq.com</div>

<div class="grp" style="left:539px;top:165px;width:211px;height:94px"></div>
<div class="gl" style="left:546px;top:159px"><svg class="cj" width="72" height="13"><path d="M2 0h1v1h-1zM6 0h1v1h-1zM2 1h1v1h-1zM6 1h1v1h-1zM9 1h2v1h-2zM0 2h5v1h-5zM6 2h3v1h-3zM2 3h1v1h-1zM6 3h1v1h-1zM10 3h1v1h-1zM2 4h1v1h-1zM4 4h1v1h-1zM6 4h5v1h-5zM2 5h2v1h-2zM1 6h2v1h-2zM6 6h5v1h-5zM0 7h1v1h-1zM2 7h1v1h-1zM6 7h1v1h-1zM10 7h1v1h-1zM2 8h1v1h-1zM6 8h5v1h-5zM2 9h1v1h-1zM6 9h1v1h-1zM10 9h1v1h-1zM0 10h3v1h-3zM6 10h5v1h-5zM17 0h1v1h-1zM13 1h10v1h-10zM13 2h1v1h-1zM22 2h1v1h-1zM12 3h1v1h-1zM21 3h1v1h-1zM14 4h8v1h-8zM17 5h1v1h-1zM14 6h1v1h-1zM17 6h1v1h-1zM14 7h1v1h-1zM17 7h4v1h-4zM14 8h1v1h-1zM17 8h1v1h-1zM13 9h1v1h-1zM15 9h1v1h-1zM17 9h1v1h-1zM12 10h1v1h-1zM16 10h7v1h-7zM25 0h5v1h-5zM34 0h1v1h-1zM25 1h1v1h-1zM29 1h1v1h-1zM33 1h1v1h-1zM25 2h5v1h-5zM32 2h1v1h-1zM25 3h1v1h-1zM29 3h1v1h-1zM31 3h1v1h-1zM34 3h1v1h-1zM25 4h5v1h-5zM33 4h1v1h-1zM27 5h1v1h-1zM32 5h1v1h-1zM24 6h8v1h-8zM25 7h1v1h-1zM29 7h1v1h-1zM34 7h1v1h-1zM25 8h5v1h-5zM33 8h1v1h-1zM25 9h1v1h-1zM27 9h1v1h-1zM29 9h1v1h-1zM32 9h1v1h-1zM24 10h1v1h-1zM26 10h2v1h-2zM30 10h2v1h-2zM38 0h1v1h-1zM43 0h1v1h-1zM38 1h1v1h-1zM43 1h1v1h-1zM38 2h1v1h-1zM43 2h1v1h-1zM38 3h9v1h-9zM38 4h1v1h-1zM38 5h1v1h-1zM38 6h7v1h-7zM38 7h1v1h-1zM44 7h1v1h-1zM38 8h1v1h-1zM44 8h1v1h-1zM37 9h1v1h-1zM44 9h1v1h-1zM36 10h1v1h-1zM44 10h1v1h-1zM48 0h4v1h-4zM53 0h1v1h-1zM48 1h1v1h-1zM51 1h1v1h-1zM53 1h5v1h-5zM48 2h1v1h-1zM51 2h1v1h-1zM53 2h1v1h-1zM57 2h1v1h-1zM48 3h1v1h-1zM51 3h2v1h-2zM54 3h1v1h-1zM56 3h1v1h-1zM48 4h4v1h-4zM55 4h1v1h-1zM50 5h1v1h-1zM54 5h1v1h-1zM56 5h1v1h-1zM48 6h1v1h-1zM50 6h2v1h-2zM53 6h1v1h-1zM57 6h1v1h-1zM48 7h1v1h-1zM50 7h1v1h-1zM52 7h7v1h-7zM48 8h1v1h-1zM50 8h1v1h-1zM53 8h1v1h-1zM57 8h1v1h-1zM48 9h1v1h-1zM50 9h2v1h-2zM53 9h1v1h-1zM57 9h1v1h-1zM48 10h2v1h-2zM53 10h5v1h-5zM63 0h1v1h-1zM65 0h5v1h-5zM62 1h1v1h-1zM68 1h1v1h-1zM61 2h1v1h-1zM64 2h1v1h-1zM67 2h1v1h-1zM60 3h1v1h-1zM63 3h1v1h-1zM66 3h1v1h-1zM68 3h1v1h-1zM62 4h1v1h-1zM65 4h1v1h-1zM69 4h1v1h-1zM61 5h2v1h-2zM64 5h1v1h-1zM70 5h1v1h-1zM60 6h1v1h-1zM62 6h1v1h-1zM65 6h5v1h-5zM62 7h1v1h-1zM67 7h1v1h-1zM62 8h1v1h-1zM67 8h1v1h-1zM62 9h1v1h-1zM67 9h1v1h-1zM62 10h1v1h-1zM64 10h7v1h-7z"/></svg><span style="margin-left:2px">:</span></div>
<div class="t" style="left:548px;top:189px;font-size:12px;color:#dedede"><svg class="cj" width="48" height="13"><path d="M2 0h1v1h-1zM6 0h4v1h-4zM2 1h1v1h-1zM6 1h1v1h-1zM9 1h1v1h-1zM0 2h5v1h-5zM6 2h1v1h-1zM9 2h1v1h-1zM2 3h1v1h-1zM5 3h1v1h-1zM9 3h2v1h-2zM2 4h1v1h-1zM4 4h1v1h-1zM2 5h2v1h-2zM5 5h5v1h-5zM1 6h2v1h-2zM5 6h1v1h-1zM9 6h1v1h-1zM0 7h1v1h-1zM2 7h1v1h-1zM6 7h1v1h-1zM8 7h1v1h-1zM2 8h1v1h-1zM7 8h1v1h-1zM2 9h1v1h-1zM6 9h1v1h-1zM8 9h1v1h-1zM0 10h3v1h-3zM4 10h2v1h-2zM9 10h2v1h-2zM13 0h5v1h-5zM22 0h1v1h-1zM13 1h1v1h-1zM17 1h1v1h-1zM21 1h1v1h-1zM13 2h5v1h-5zM20 2h1v1h-1zM13 3h1v1h-1zM17 3h1v1h-1zM19 3h1v1h-1zM22 3h1v1h-1zM13 4h5v1h-5zM21 4h1v1h-1zM15 5h1v1h-1zM20 5h1v1h-1zM12 6h8v1h-8zM13 7h1v1h-1zM17 7h1v1h-1zM22 7h1v1h-1zM13 8h5v1h-5zM21 8h1v1h-1zM13 9h1v1h-1zM15 9h1v1h-1zM17 9h1v1h-1zM20 9h1v1h-1zM12 10h1v1h-1zM14 10h2v1h-2zM18 10h2v1h-2zM26 0h1v1h-1zM30 0h1v1h-1zM32 0h1v1h-1zM26 1h1v1h-1zM28 1h7v1h-7zM24 2h4v1h-4zM30 2h1v1h-1zM32 2h1v1h-1zM26 3h1v1h-1zM29 3h5v1h-5zM26 4h2v1h-2zM29 4h1v1h-1zM33 4h1v1h-1zM25 5h2v1h-2zM28 5h6v1h-6zM25 6h2v1h-2zM29 6h1v1h-1zM33 6h1v1h-1zM24 7h1v1h-1zM26 7h1v1h-1zM28 7h7v1h-7zM26 8h1v1h-1zM31 8h1v1h-1zM26 9h1v1h-1zM30 9h1v1h-1zM32 9h1v1h-1zM26 10h1v1h-1zM28 10h2v1h-2zM33 10h2v1h-2zM42 0h1v1h-1zM44 0h1v1h-1zM42 1h1v1h-1zM45 1h1v1h-1zM42 2h1v1h-1zM36 3h11v1h-11zM42 4h1v1h-1zM37 5h4v1h-4zM42 5h1v1h-1zM39 6h1v1h-1zM42 6h1v1h-1zM39 7h1v1h-1zM43 7h1v1h-1zM39 8h1v1h-1zM43 8h1v1h-1zM46 8h1v1h-1zM39 9h2v1h-2zM44 9h1v1h-1zM46 9h1v1h-1zM36 10h3v1h-3zM45 10h2v1h-2z"/></svg><span style="margin-left:1px">:</span></div>
<div class="a" style="left:548px;top:206px;width:193px;height:20px;background:#e4e4e4;border-top:2px solid #0a0a0a;border-left:2px solid #0a0a0a;border-right:1px solid #2a2a2a;border-bottom:1px solid #2a2a2a"></div>
<div class="t" style="left:552px;top:211px;font-size:12px;color:#000"><svg class="cj" width="72" height="13"><path d="M3 0h1v1h-1zM7 0h1v1h-1zM3 1h1v1h-1zM7 1h1v1h-1zM2 2h1v1h-1zM8 2h1v1h-1zM2 3h1v1h-1zM8 3h1v1h-1zM1 4h1v1h-1zM9 4h1v1h-1zM0 5h1v1h-1zM2 5h7v1h-7zM10 5h1v1h-1zM4 6h1v1h-1zM8 6h1v1h-1zM4 7h1v1h-1zM8 7h1v1h-1zM3 8h1v1h-1zM8 8h1v1h-1zM2 9h1v1h-1zM8 9h1v1h-1zM0 10h2v1h-2zM6 10h2v1h-2zM13 0h9v1h-9zM13 1h1v1h-1zM13 2h1v1h-1zM15 2h1v1h-1zM20 2h1v1h-1zM13 3h1v1h-1zM16 3h1v1h-1zM20 3h1v1h-1zM13 4h1v1h-1zM17 4h1v1h-1zM19 4h1v1h-1zM13 5h1v1h-1zM18 5h1v1h-1zM13 6h1v1h-1zM17 6h1v1h-1zM19 6h1v1h-1zM13 7h1v1h-1zM16 7h1v1h-1zM20 7h1v1h-1zM13 8h1v1h-1zM15 8h1v1h-1zM20 8h1v1h-1zM13 9h1v1h-1zM13 10h10v1h-10zM24 0h5v1h-5zM32 0h1v1h-1zM24 1h1v1h-1zM28 1h1v1h-1zM32 1h1v1h-1zM24 2h1v1h-1zM26 2h1v1h-1zM28 2h1v1h-1zM32 2h3v1h-3zM24 3h1v1h-1zM26 3h1v1h-1zM28 3h1v1h-1zM32 3h1v1h-1zM24 4h1v1h-1zM26 4h1v1h-1zM28 4h1v1h-1zM32 4h1v1h-1zM24 5h1v1h-1zM26 5h1v1h-1zM28 5h1v1h-1zM30 5h5v1h-5zM24 6h1v1h-1zM26 6h1v1h-1zM28 6h1v1h-1zM30 6h1v1h-1zM34 6h1v1h-1zM24 7h1v1h-1zM26 7h1v1h-1zM28 7h1v1h-1zM30 7h1v1h-1zM34 7h1v1h-1zM26 8h1v1h-1zM30 8h1v1h-1zM34 8h1v1h-1zM25 9h1v1h-1zM27 9h1v1h-1zM30 9h5v1h-5zM24 10h1v1h-1zM28 10h1v1h-1zM30 10h1v1h-1zM34 10h1v1h-1zM37 0h10v1h-10zM37 1h1v1h-1zM40 1h1v1h-1zM46 1h1v1h-1zM37 2h1v1h-1zM40 2h5v1h-5zM46 2h1v1h-1zM37 3h1v1h-1zM39 3h2v1h-2zM43 3h1v1h-1zM46 3h1v1h-1zM37 4h2v1h-2zM41 4h2v1h-2zM46 4h1v1h-1zM37 5h1v1h-1zM40 5h1v1h-1zM43 5h1v1h-1zM46 5h1v1h-1zM37 6h3v1h-3zM41 6h1v1h-1zM44 6h3v1h-3zM37 7h1v1h-1zM42 7h1v1h-1zM46 7h1v1h-1zM37 8h1v1h-1zM41 8h1v1h-1zM46 8h1v1h-1zM37 9h1v1h-1zM42 9h1v1h-1zM46 9h1v1h-1zM37 10h10v1h-10zM50 0h1v1h-1zM54 0h1v1h-1zM56 0h1v1h-1zM50 1h1v1h-1zM52 1h7v1h-7zM48 2h4v1h-4zM54 2h1v1h-1zM56 2h1v1h-1zM50 3h1v1h-1zM53 3h5v1h-5zM50 4h2v1h-2zM53 4h1v1h-1zM57 4h1v1h-1zM49 5h2v1h-2zM52 5h6v1h-6zM49 6h2v1h-2zM53 6h1v1h-1zM57 6h1v1h-1zM48 7h1v1h-1zM50 7h1v1h-1zM52 7h7v1h-7zM50 8h1v1h-1zM55 8h1v1h-1zM50 9h1v1h-1zM54 9h1v1h-1zM56 9h1v1h-1zM50 10h1v1h-1zM52 10h2v1h-2zM57 10h2v1h-2zM66 0h1v1h-1zM68 0h1v1h-1zM66 1h1v1h-1zM69 1h1v1h-1zM66 2h1v1h-1zM60 3h11v1h-11zM66 4h1v1h-1zM61 5h4v1h-4zM66 5h1v1h-1zM63 6h1v1h-1zM66 6h1v1h-1zM63 7h1v1h-1zM67 7h1v1h-1zM63 8h1v1h-1zM67 8h1v1h-1zM70 8h1v1h-1zM63 9h2v1h-2zM68 9h1v1h-1zM70 9h1v1h-1zM60 10h3v1h-3zM69 10h2v1h-2z"/></svg></div>
<svg class="a" style="left:728px;top:213px" width="10" height="8"><path d="M1 2 L5 5.8 L9 2" fill="none" stroke="#3a3a3a" stroke-width="1"/></svg>
<div class="btn" style="left:555px;top:233px;width:180px;height:21px;line-height:20px"><svg class="cj" width="72" height="13"><path d="M2 0h7v1h-7zM2 1h1v1h-1zM8 1h1v1h-1zM2 2h7v1h-7zM10 2h1v1h-1zM2 3h1v1h-1zM10 3h1v1h-1zM3 4h8v1h-8zM7 5h1v1h-1zM0 6h11v1h-11zM3 7h1v1h-1zM7 7h1v1h-1zM4 8h1v1h-1zM7 8h1v1h-1zM4 9h1v1h-1zM7 9h1v1h-1zM6 10h2v1h-2zM15 0h2v1h-2zM17 1h1v1h-1zM17 2h1v1h-1zM17 3h1v1h-1zM16 4h1v1h-1zM18 4h1v1h-1zM16 5h1v1h-1zM18 5h1v1h-1zM15 6h1v1h-1zM19 6h1v1h-1zM15 7h1v1h-1zM19 7h1v1h-1zM14 8h1v1h-1zM20 8h1v1h-1zM13 9h1v1h-1zM21 9h1v1h-1zM12 10h1v1h-1zM22 10h1v1h-1zM26 0h1v1h-1zM30 0h4v1h-4zM26 1h1v1h-1zM30 1h1v1h-1zM33 1h1v1h-1zM24 2h5v1h-5zM30 2h1v1h-1zM33 2h1v1h-1zM26 3h1v1h-1zM29 3h1v1h-1zM33 3h2v1h-2zM26 4h1v1h-1zM28 4h1v1h-1zM26 5h2v1h-2zM29 5h5v1h-5zM25 6h2v1h-2zM29 6h1v1h-1zM33 6h1v1h-1zM24 7h1v1h-1zM26 7h1v1h-1zM30 7h1v1h-1zM32 7h1v1h-1zM26 8h1v1h-1zM31 8h1v1h-1zM26 9h1v1h-1zM30 9h1v1h-1zM32 9h1v1h-1zM24 10h3v1h-3zM28 10h2v1h-2zM33 10h2v1h-2zM37 0h5v1h-5zM46 0h1v1h-1zM37 1h1v1h-1zM41 1h1v1h-1zM45 1h1v1h-1zM37 2h5v1h-5zM44 2h1v1h-1zM37 3h1v1h-1zM41 3h1v1h-1zM43 3h1v1h-1zM46 3h1v1h-1zM37 4h5v1h-5zM45 4h1v1h-1zM39 5h1v1h-1zM44 5h1v1h-1zM36 6h8v1h-8zM37 7h1v1h-1zM41 7h1v1h-1zM46 7h1v1h-1zM37 8h5v1h-5zM45 8h1v1h-1zM37 9h1v1h-1zM39 9h1v1h-1zM41 9h1v1h-1zM44 9h1v1h-1zM36 10h1v1h-1zM38 10h2v1h-2zM42 10h2v1h-2zM49 0h5v1h-5zM58 0h1v1h-1zM49 1h1v1h-1zM53 1h1v1h-1zM57 1h1v1h-1zM49 2h5v1h-5zM56 2h1v1h-1zM49 3h1v1h-1zM53 3h1v1h-1zM55 3h1v1h-1zM58 3h1v1h-1zM49 4h5v1h-5zM57 4h1v1h-1zM51 5h1v1h-1zM56 5h1v1h-1zM48 6h8v1h-8zM49 7h1v1h-1zM53 7h1v1h-1zM58 7h1v1h-1zM49 8h5v1h-5zM57 8h1v1h-1zM49 9h1v1h-1zM51 9h1v1h-1zM53 9h1v1h-1zM56 9h1v1h-1zM48 10h1v1h-1zM50 10h2v1h-2zM54 10h2v1h-2zM62 0h1v1h-1zM67 0h1v1h-1zM62 1h1v1h-1zM67 1h1v1h-1zM62 2h1v1h-1zM67 2h1v1h-1zM62 3h9v1h-9zM62 4h1v1h-1zM62 5h1v1h-1zM62 6h7v1h-7zM62 7h1v1h-1zM68 7h1v1h-1zM62 8h1v1h-1zM68 8h1v1h-1zM61 9h1v1h-1zM68 9h1v1h-1zM60 10h1v1h-1zM68 10h1v1h-1z"/></svg></div>

<div class="grp" style="left:539px;top:271px;width:211px;height:380px"></div>
<div class="gl" style="left:546px;top:265px"><svg class="cj" width="60" height="13"><path d="M1 0h1v1h-1zM5 0h5v1h-5zM2 1h1v1h-1zM5 1h1v1h-1zM9 1h1v1h-1zM0 2h4v1h-4zM5 2h1v1h-1zM7 2h1v1h-1zM9 2h1v1h-1zM3 3h1v1h-1zM5 3h1v1h-1zM7 3h1v1h-1zM9 3h1v1h-1zM2 4h1v1h-1zM5 4h1v1h-1zM7 4h1v1h-1zM9 4h1v1h-1zM1 5h3v1h-3zM5 5h1v1h-1zM7 5h1v1h-1zM9 5h1v1h-1zM0 6h1v1h-1zM2 6h1v1h-1zM5 6h1v1h-1zM7 6h1v1h-1zM9 6h1v1h-1zM2 7h1v1h-1zM7 7h1v1h-1zM2 8h1v1h-1zM6 8h2v1h-2zM10 8h1v1h-1zM2 9h1v1h-1zM5 9h1v1h-1zM7 9h1v1h-1zM10 9h1v1h-1zM2 10h1v1h-1zM4 10h1v1h-1zM8 10h3v1h-3zM12 0h5v1h-5zM18 0h5v1h-5zM12 1h1v1h-1zM14 1h1v1h-1zM16 1h1v1h-1zM21 1h1v1h-1zM12 2h5v1h-5zM19 2h2v1h-2zM12 3h1v1h-1zM14 3h1v1h-1zM16 3h1v1h-1zM20 3h1v1h-1zM12 4h1v1h-1zM14 4h1v1h-1zM16 4h7v1h-7zM12 5h5v1h-5zM20 5h1v1h-1zM22 5h1v1h-1zM14 6h1v1h-1zM20 6h1v1h-1zM12 7h5v1h-5zM20 7h1v1h-1zM14 8h1v1h-1zM20 8h1v1h-1zM14 9h3v1h-3zM20 9h1v1h-1zM12 10h2v1h-2zM18 10h3v1h-3zM26 0h1v1h-1zM31 0h1v1h-1zM26 1h1v1h-1zM28 1h7v1h-7zM24 2h5v1h-5zM34 2h1v1h-1zM26 3h1v1h-1zM30 3h1v1h-1zM32 3h1v1h-1zM26 4h1v1h-1zM29 4h1v1h-1zM33 4h1v1h-1zM26 5h3v1h-3zM34 5h1v1h-1zM25 6h2v1h-2zM29 6h5v1h-5zM24 7h1v1h-1zM26 7h1v1h-1zM31 7h1v1h-1zM26 8h1v1h-1zM31 8h1v1h-1zM26 9h1v1h-1zM31 9h1v1h-1zM24 10h3v1h-3zM28 10h7v1h-7zM39 0h1v1h-1zM46 0h1v1h-1zM37 1h1v1h-1zM39 1h1v1h-1zM44 1h1v1h-1zM46 1h1v1h-1zM37 2h6v1h-6zM44 2h1v1h-1zM46 2h1v1h-1zM36 3h1v1h-1zM39 3h1v1h-1zM44 3h1v1h-1zM46 3h1v1h-1zM36 4h7v1h-7zM44 4h1v1h-1zM46 4h1v1h-1zM39 5h1v1h-1zM44 5h1v1h-1zM46 5h1v1h-1zM37 6h6v1h-6zM44 6h1v1h-1zM46 6h1v1h-1zM37 7h1v1h-1zM39 7h1v1h-1zM42 7h1v1h-1zM44 7h1v1h-1zM46 7h1v1h-1zM37 8h1v1h-1zM39 8h1v1h-1zM42 8h1v1h-1zM46 8h1v1h-1zM37 9h1v1h-1zM39 9h1v1h-1zM41 9h2v1h-2zM46 9h1v1h-1zM39 10h1v1h-1zM44 10h3v1h-3zM49 0h4v1h-4zM54 0h4v1h-4zM49 1h1v1h-1zM52 1h1v1h-1zM54 1h1v1h-1zM57 1h1v1h-1zM49 2h1v1h-1zM52 2h1v1h-1zM54 2h1v1h-1zM57 2h1v1h-1zM49 3h4v1h-4zM54 3h4v1h-4zM53 4h1v1h-1zM56 4h1v1h-1zM48 5h11v1h-11zM51 6h1v1h-1zM55 6h1v1h-1zM48 7h5v1h-5zM54 7h5v1h-5zM49 8h1v1h-1zM52 8h1v1h-1zM54 8h1v1h-1zM57 8h1v1h-1zM49 9h1v1h-1zM52 9h1v1h-1zM54 9h1v1h-1zM57 9h1v1h-1zM49 10h4v1h-4zM54 10h4v1h-4z"/></svg><span style="margin-left:2px">:</span></div>
<div class="t" style="left:567px;top:294px;font-size:12px;color:#e0e0e0"><svg class="cj" width="156" height="13"><path d="M1 0h1v1h-1zM7 0h1v1h-1zM2 1h1v1h-1zM4 1h7v1h-7zM2 2h1v1h-1zM7 2h1v1h-1zM5 3h5v1h-5zM0 4h3v1h-3zM7 4h1v1h-1zM2 5h1v1h-1zM4 5h7v1h-7zM2 6h1v1h-1zM5 6h1v1h-1zM9 6h1v1h-1zM2 7h1v1h-1zM5 7h5v1h-5zM2 8h1v1h-1zM5 8h1v1h-1zM9 8h1v1h-1zM2 9h2v1h-2zM5 9h5v1h-5zM2 10h1v1h-1zM5 10h1v1h-1zM9 10h1v1h-1zM14 0h1v1h-1zM17 0h1v1h-1zM14 1h1v1h-1zM17 1h6v1h-6zM12 2h5v1h-5zM14 3h1v1h-1zM19 3h1v1h-1zM14 4h1v1h-1zM17 4h1v1h-1zM19 4h3v1h-3zM14 5h2v1h-2zM17 5h3v1h-3zM21 5h1v1h-1zM13 6h2v1h-2zM16 6h2v1h-2zM19 6h1v1h-1zM21 6h1v1h-1zM12 7h1v1h-1zM14 7h1v1h-1zM17 7h1v1h-1zM19 7h3v1h-3zM14 8h1v1h-1zM17 8h1v1h-1zM19 8h1v1h-1zM22 8h1v1h-1zM14 9h1v1h-1zM17 9h1v1h-1zM22 9h1v1h-1zM12 10h3v1h-3zM18 10h5v1h-5zM31 0h1v1h-1zM25 1h4v1h-4zM31 1h1v1h-1zM31 2h1v1h-1zM30 3h5v1h-5zM24 4h6v1h-6zM31 4h1v1h-1zM34 4h1v1h-1zM26 5h1v1h-1zM31 5h1v1h-1zM34 5h1v1h-1zM26 6h1v1h-1zM31 6h1v1h-1zM34 6h1v1h-1zM25 7h1v1h-1zM28 7h1v1h-1zM31 7h1v1h-1zM34 7h1v1h-1zM24 8h5v1h-5zM30 8h1v1h-1zM34 8h1v1h-1zM28 9h1v1h-1zM30 9h1v1h-1zM34 9h1v1h-1zM29 10h1v1h-1zM32 10h2v1h-2zM38 0h1v1h-1zM41 0h5v1h-5zM38 1h1v1h-1zM41 1h1v1h-1zM45 1h1v1h-1zM36 2h4v1h-4zM41 2h5v1h-5zM38 3h1v1h-1zM40 3h3v1h-3zM44 3h3v1h-3zM38 4h1v1h-1zM40 4h1v1h-1zM42 4h1v1h-1zM44 4h1v1h-1zM46 4h1v1h-1zM38 5h5v1h-5zM44 5h3v1h-3zM36 6h3v1h-3zM43 6h1v1h-1zM38 7h9v1h-9zM38 8h1v1h-1zM42 8h3v1h-3zM38 9h1v1h-1zM41 9h1v1h-1zM43 9h1v1h-1zM45 9h1v1h-1zM37 10h2v1h-2zM40 10h1v1h-1zM43 10h1v1h-1zM46 10h1v1h-1zM50 0h1v1h-1zM53 0h1v1h-1zM56 0h1v1h-1zM50 1h1v1h-1zM53 1h1v1h-1zM56 1h1v1h-1zM49 2h1v1h-1zM53 2h1v1h-1zM56 2h1v1h-1zM49 3h1v1h-1zM51 3h1v1h-1zM53 3h1v1h-1zM56 3h1v1h-1zM48 4h3v1h-3zM53 4h1v1h-1zM56 4h1v1h-1zM50 5h1v1h-1zM53 5h2v1h-2zM56 5h1v1h-1zM49 6h1v1h-1zM53 6h1v1h-1zM55 6h2v1h-2zM48 7h5v1h-5zM56 7h1v1h-1zM52 8h1v1h-1zM55 8h1v1h-1zM57 8h1v1h-1zM50 9h2v1h-2zM54 9h1v1h-1zM58 9h1v1h-1zM48 10h2v1h-2zM53 10h1v1h-1zM58 10h1v1h-1zM66 0h1v1h-1zM61 1h10v1h-10zM61 2h1v1h-1zM63 2h1v1h-1zM68 2h1v1h-1zM70 2h1v1h-1zM62 3h1v1h-1zM65 3h1v1h-1zM69 3h1v1h-1zM61 4h10v1h-10zM62 5h1v1h-1zM65 5h1v1h-1zM69 5h1v1h-1zM62 6h1v1h-1zM64 6h6v1h-6zM62 7h3v1h-3zM67 7h1v1h-1zM69 7h1v1h-1zM62 8h1v1h-1zM65 8h2v1h-2zM69 8h1v1h-1zM62 9h1v1h-1zM64 9h1v1h-1zM67 9h1v1h-1zM69 9h1v1h-1zM62 10h8v1h-8zM77 0h1v1h-1zM77 1h1v1h-1zM73 2h10v1h-10zM73 3h1v1h-1zM77 3h1v1h-1zM82 3h1v1h-1zM73 4h1v1h-1zM77 4h1v1h-1zM82 4h1v1h-1zM73 5h1v1h-1zM77 5h2v1h-2zM82 5h1v1h-1zM73 6h1v1h-1zM76 6h1v1h-1zM79 6h1v1h-1zM82 6h1v1h-1zM73 7h1v1h-1zM75 7h1v1h-1zM80 7h1v1h-1zM82 7h1v1h-1zM73 8h1v1h-1zM82 8h1v1h-1zM73 9h1v1h-1zM82 9h1v1h-1zM73 10h1v1h-1zM80 10h3v1h-3zM89 0h1v1h-1zM86 1h1v1h-1zM89 1h1v1h-1zM92 1h1v1h-1zM86 2h1v1h-1zM89 2h1v1h-1zM92 2h1v1h-1zM86 3h1v1h-1zM89 3h1v1h-1zM92 3h1v1h-1zM85 4h1v1h-1zM87 4h1v1h-1zM89 4h1v1h-1zM91 4h1v1h-1zM93 4h1v1h-1zM84 5h1v1h-1zM88 5h3v1h-3zM94 5h1v1h-1zM89 6h1v1h-1zM85 7h9v1h-9zM89 8h1v1h-1zM89 9h1v1h-1zM84 10h11v1h-11zM98 0h1v1h-1zM101 0h5v1h-5zM98 1h1v1h-1zM96 2h5v1h-5zM98 3h1v1h-1zM100 3h7v1h-7zM98 4h1v1h-1zM103 4h1v1h-1zM97 5h3v1h-3zM103 5h1v1h-1zM97 6h2v1h-2zM101 6h1v1h-1zM103 6h1v1h-1zM105 6h1v1h-1zM96 7h1v1h-1zM98 7h1v1h-1zM101 7h1v1h-1zM103 7h1v1h-1zM106 7h1v1h-1zM98 8h1v1h-1zM100 8h1v1h-1zM103 8h1v1h-1zM106 8h1v1h-1zM98 9h1v1h-1zM103 9h1v1h-1zM98 10h1v1h-1zM102 10h2v1h-2zM111 0h1v1h-1zM115 0h1v1h-1zM108 1h3v1h-3zM114 1h5v1h-5zM110 2h1v1h-1zM113 2h1v1h-1zM118 2h1v1h-1zM108 3h5v1h-5zM114 3h1v1h-1zM117 3h1v1h-1zM110 4h1v1h-1zM115 4h2v1h-2zM110 5h2v1h-2zM113 5h2v1h-2zM116 5h1v1h-1zM110 6h1v1h-1zM112 6h1v1h-1zM115 6h4v1h-4zM109 7h2v1h-2zM114 7h1v1h-1zM118 7h1v1h-1zM108 8h1v1h-1zM110 8h1v1h-1zM113 8h1v1h-1zM115 8h1v1h-1zM117 8h1v1h-1zM110 9h1v1h-1zM116 9h1v1h-1zM110 10h1v1h-1zM113 10h3v1h-3zM127 0h1v1h-1zM121 1h4v1h-4zM127 1h1v1h-1zM127 2h1v1h-1zM126 3h5v1h-5zM120 4h6v1h-6zM127 4h1v1h-1zM130 4h1v1h-1zM122 5h1v1h-1zM127 5h1v1h-1zM130 5h1v1h-1zM122 6h1v1h-1zM127 6h1v1h-1zM130 6h1v1h-1zM121 7h1v1h-1zM124 7h1v1h-1zM127 7h1v1h-1zM130 7h1v1h-1zM120 8h5v1h-5zM126 8h1v1h-1zM130 8h1v1h-1zM124 9h1v1h-1zM126 9h1v1h-1zM130 9h1v1h-1zM125 10h1v1h-1zM128 10h2v1h-2zM133 0h1v1h-1zM137 0h5v1h-5zM134 1h1v1h-1zM137 1h1v1h-1zM141 1h1v1h-1zM132 2h4v1h-4zM137 2h1v1h-1zM139 2h1v1h-1zM141 2h1v1h-1zM135 3h1v1h-1zM137 3h1v1h-1zM139 3h1v1h-1zM141 3h1v1h-1zM134 4h1v1h-1zM137 4h1v1h-1zM139 4h1v1h-1zM141 4h1v1h-1zM133 5h3v1h-3zM137 5h1v1h-1zM139 5h1v1h-1zM141 5h1v1h-1zM132 6h1v1h-1zM134 6h1v1h-1zM137 6h1v1h-1zM139 6h1v1h-1zM141 6h1v1h-1zM134 7h1v1h-1zM139 7h1v1h-1zM134 8h1v1h-1zM138 8h2v1h-2zM142 8h1v1h-1zM134 9h1v1h-1zM137 9h1v1h-1zM139 9h1v1h-1zM142 9h1v1h-1zM134 10h1v1h-1zM136 10h1v1h-1zM140 10h3v1h-3zM147 0h1v1h-1zM147 1h5v1h-5zM146 2h1v1h-1zM150 2h1v1h-1zM145 3h9v1h-9zM144 4h1v1h-1zM146 4h1v1h-1zM149 4h1v1h-1zM153 4h1v1h-1zM146 5h8v1h-8zM146 6h1v1h-1zM149 6h1v1h-1zM153 6h1v1h-1zM146 7h8v1h-8zM146 8h1v1h-1zM149 8h1v1h-1zM153 8h1v1h-1zM145 9h1v1h-1zM149 9h1v1h-1zM151 9h1v1h-1zM153 9h1v1h-1zM144 10h1v1h-1zM152 10h1v1h-1z"/></svg></div>
<div class="a" style="left:545px;top:312px;width:200px;height:100px;background:#808080;border-top:1px solid #b4b4b4;border-left:1px solid #b4b4b4;border-right:2px solid #fff;border-bottom:2px solid #fff;box-shadow:inset 1px 1px 0 #727272"></div>
<svg class="a" style="left:636px;top:352px" width="21" height="20"><path d="M1.3 10.6 L9.3 9.5 L19.7 10.6 L9.3 11.7 Z M9.3 0.5 L10.4 10.6 L9.3 18.5 L8.2 10.6 Z" fill="#c8183c"/></svg>
<div class="t" style="left:549px;top:421px;font-size:12px;color:#dedede"><svg class="cj" width="48" height="13"><path d="M1 0h1v1h-1zM5 0h5v1h-5zM2 1h1v1h-1zM5 1h1v1h-1zM9 1h1v1h-1zM0 2h4v1h-4zM5 2h1v1h-1zM7 2h1v1h-1zM9 2h1v1h-1zM3 3h1v1h-1zM5 3h1v1h-1zM7 3h1v1h-1zM9 3h1v1h-1zM2 4h1v1h-1zM5 4h1v1h-1zM7 4h1v1h-1zM9 4h1v1h-1zM1 5h3v1h-3zM5 5h1v1h-1zM7 5h1v1h-1zM9 5h1v1h-1zM0 6h1v1h-1zM2 6h1v1h-1zM5 6h1v1h-1zM7 6h1v1h-1zM9 6h1v1h-1zM2 7h1v1h-1zM7 7h1v1h-1zM2 8h1v1h-1zM6 8h2v1h-2zM10 8h1v1h-1zM2 9h1v1h-1zM5 9h1v1h-1zM7 9h1v1h-1zM10 9h1v1h-1zM2 10h1v1h-1zM4 10h1v1h-1zM8 10h3v1h-3zM14 0h1v1h-1zM16 0h6v1h-6zM14 1h1v1h-1zM20 1h1v1h-1zM14 2h1v1h-1zM19 2h1v1h-1zM12 3h4v1h-4zM18 3h1v1h-1zM14 4h1v1h-1zM16 4h7v1h-7zM14 5h1v1h-1zM18 5h1v1h-1zM20 5h1v1h-1zM22 5h1v1h-1zM14 6h1v1h-1zM17 6h1v1h-1zM20 6h1v1h-1zM22 6h1v1h-1zM14 7h3v1h-3zM19 7h1v1h-1zM22 7h1v1h-1zM12 8h2v1h-2zM18 8h1v1h-1zM22 8h1v1h-1zM16 9h2v1h-2zM22 9h1v1h-1zM20 10h2v1h-2zM29 0h1v1h-1zM29 1h1v1h-1zM29 2h1v1h-1zM24 3h11v1h-11zM29 4h1v1h-1zM29 5h1v1h-1zM28 6h1v1h-1zM30 6h1v1h-1zM28 7h1v1h-1zM30 7h1v1h-1zM27 8h1v1h-1zM31 8h1v1h-1zM26 9h1v1h-1zM32 9h1v1h-1zM24 10h2v1h-2zM33 10h2v1h-2zM41 0h1v1h-1zM41 1h1v1h-1zM41 2h1v1h-1zM38 3h1v1h-1zM41 3h1v1h-1zM44 3h1v1h-1zM38 4h1v1h-1zM41 4h1v1h-1zM45 4h1v1h-1zM37 5h1v1h-1zM41 5h1v1h-1zM45 5h1v1h-1zM37 6h1v1h-1zM41 6h1v1h-1zM46 6h1v1h-1zM36 7h1v1h-1zM41 7h1v1h-1zM46 7h1v1h-1zM41 8h1v1h-1zM39 9h1v1h-1zM41 9h1v1h-1zM40 10h1v1h-1z"/></svg><span style="margin-left:1px">:</span></div>
<svg class="a" style="left:549px;top:440px" width="185" height="30"><line x1="6.5" y1="1.5" x2="6.5" y2="6" stroke="#d8d8d8" stroke-width="1"/><line x1="13.5" y1="2" x2="13.5" y2="6" stroke="#d8d8d8" stroke-width="1"/><line x1="19.5" y1="2" x2="19.5" y2="6" stroke="#d8d8d8" stroke-width="1"/><line x1="26.5" y1="2" x2="26.5" y2="6" stroke="#d8d8d8" stroke-width="1"/><line x1="33.5" y1="2" x2="33.5" y2="6" stroke="#d8d8d8" stroke-width="1"/><line x1="39.5" y1="2" x2="39.5" y2="6" stroke="#d8d8d8" stroke-width="1"/><line x1="46.5" y1="2" x2="46.5" y2="6" stroke="#d8d8d8" stroke-width="1"/><line x1="53.5" y1="2" x2="53.5" y2="6" stroke="#d8d8d8" stroke-width="1"/><line x1="59.5" y1="2" x2="59.5" y2="6" stroke="#d8d8d8" stroke-width="1"/><line x1="66.5" y1="2" x2="66.5" y2="6" stroke="#d8d8d8" stroke-width="1"/><line x1="73.5" y1="2" x2="73.5" y2="6" stroke="#d8d8d8" stroke-width="1"/><line x1="79.5" y1="2" x2="79.5" y2="6" stroke="#d8d8d8" stroke-width="1"/><line x1="86.5" y1="2" x2="86.5" y2="6" stroke="#d8d8d8" stroke-width="1"/><line x1="93.5" y1="2" x2="93.5" y2="6" stroke="#d8d8d8" stroke-width="1"/><line x1="100.5" y1="2" x2="100.5" y2="6" stroke="#d8d8d8" stroke-width="1"/><line x1="106.5" y1="2" x2="106.5" y2="6" stroke="#d8d8d8" stroke-width="1"/><line x1="113.5" y1="2" x2="113.5" y2="6" stroke="#d8d8d8" stroke-width="1"/><line x1="120.5" y1="2" x2="120.5" y2="6" stroke="#d8d8d8" stroke-width="1"/><line x1="126.5" y1="2" x2="126.5" y2="6" stroke="#d8d8d8" stroke-width="1"/><line x1="133.5" y1="2" x2="133.5" y2="6" stroke="#d8d8d8" stroke-width="1"/><line x1="140.5" y1="2" x2="140.5" y2="6" stroke="#d8d8d8" stroke-width="1"/><line x1="146.5" y1="2" x2="146.5" y2="6" stroke="#d8d8d8" stroke-width="1"/><line x1="153.5" y1="2" x2="153.5" y2="6" stroke="#d8d8d8" stroke-width="1"/><line x1="160.5" y1="2" x2="160.5" y2="6" stroke="#d8d8d8" stroke-width="1"/><line x1="166.5" y1="2" x2="166.5" y2="6" stroke="#d8d8d8" stroke-width="1"/><line x1="173.5" y1="1.5" x2="173.5" y2="6" stroke="#d8d8d8" stroke-width="1"/></svg>
<div class="a" style="left:550px;top:455px;width:178px;height:4px;background:#e2e2e2"></div>
<div class="a" style="left:645px;top:447px;width:11px;height:19px;background:#0a80e2;border-radius:5.5px 5.5px 1px 1px / 7px 7px 1px 1px"></div>
<div class="btn" style="left:553px;top:478px;width:64px;height:21px;line-height:20px"><svg class="cj" width="48" height="13"><path d="M1 0h1v1h-1zM5 0h5v1h-5zM2 1h1v1h-1zM5 1h1v1h-1zM9 1h1v1h-1zM0 2h4v1h-4zM5 2h1v1h-1zM7 2h1v1h-1zM9 2h1v1h-1zM3 3h1v1h-1zM5 3h1v1h-1zM7 3h1v1h-1zM9 3h1v1h-1zM2 4h1v1h-1zM5 4h1v1h-1zM7 4h1v1h-1zM9 4h1v1h-1zM1 5h3v1h-3zM5 5h1v1h-1zM7 5h1v1h-1zM9 5h1v1h-1zM0 6h1v1h-1zM2 6h1v1h-1zM5 6h1v1h-1zM7 6h1v1h-1zM9 6h1v1h-1zM2 7h1v1h-1zM7 7h1v1h-1zM2 8h1v1h-1zM6 8h2v1h-2zM10 8h1v1h-1zM2 9h1v1h-1zM5 9h1v1h-1zM7 9h1v1h-1zM10 9h1v1h-1zM2 10h1v1h-1zM4 10h1v1h-1zM8 10h3v1h-3zM12 0h5v1h-5zM18 0h5v1h-5zM12 1h1v1h-1zM14 1h1v1h-1zM16 1h1v1h-1zM21 1h1v1h-1zM12 2h5v1h-5zM19 2h2v1h-2zM12 3h1v1h-1zM14 3h1v1h-1zM16 3h1v1h-1zM20 3h1v1h-1zM12 4h1v1h-1zM14 4h1v1h-1zM16 4h7v1h-7zM12 5h5v1h-5zM20 5h1v1h-1zM22 5h1v1h-1zM14 6h1v1h-1zM20 6h1v1h-1zM12 7h5v1h-5zM20 7h1v1h-1zM14 8h1v1h-1zM20 8h1v1h-1zM14 9h3v1h-3zM20 9h1v1h-1zM12 10h2v1h-2zM18 10h3v1h-3zM26 0h1v1h-1zM26 1h9v1h-9zM25 2h2v1h-2zM32 2h1v1h-1zM24 3h1v1h-1zM26 3h7v1h-7zM26 4h1v1h-1zM32 4h1v1h-1zM26 5h7v1h-7zM27 6h1v1h-1zM26 7h7v1h-7zM24 8h2v1h-2zM28 8h1v1h-1zM31 8h1v1h-1zM29 9h2v1h-2zM24 10h5v1h-5zM31 10h4v1h-4zM39 0h1v1h-1zM42 0h1v1h-1zM39 1h1v1h-1zM43 1h1v1h-1zM38 2h1v1h-1zM38 3h1v1h-1zM40 3h7v1h-7zM37 4h2v1h-2zM36 5h1v1h-1zM38 5h1v1h-1zM41 5h1v1h-1zM45 5h1v1h-1zM38 6h1v1h-1zM42 6h1v1h-1zM45 6h1v1h-1zM38 7h1v1h-1zM42 7h1v1h-1zM44 7h1v1h-1zM38 8h1v1h-1zM44 8h1v1h-1zM38 9h1v1h-1zM43 9h1v1h-1zM38 10h1v1h-1zM40 10h7v1h-7z"/></svg></div>
<div class="btn" style="left:673px;top:476px;width:64px;height:21px;line-height:20px"><svg class="cj" width="48" height="13"><path d="M5 0h1v1h-1zM0 1h11v1h-11zM3 3h5v1h-5zM3 4h1v1h-1zM7 4h1v1h-1zM1 5h9v1h-9zM1 6h1v1h-1zM9 6h1v1h-1zM1 7h1v1h-1zM3 7h5v1h-5zM9 7h1v1h-1zM1 8h1v1h-1zM3 8h1v1h-1zM7 8h1v1h-1zM9 8h1v1h-1zM1 9h1v1h-1zM3 9h5v1h-5zM9 9h1v1h-1zM1 10h1v1h-1zM8 10h2v1h-2zM14 0h1v1h-1zM16 0h6v1h-6zM14 1h1v1h-1zM18 1h1v1h-1zM21 1h1v1h-1zM13 2h1v1h-1zM16 2h1v1h-1zM18 2h1v1h-1zM21 2h1v1h-1zM13 3h1v1h-1zM15 3h1v1h-1zM18 3h1v1h-1zM20 3h1v1h-1zM12 4h3v1h-3zM18 4h1v1h-1zM20 4h3v1h-3zM14 5h1v1h-1zM18 5h1v1h-1zM22 5h1v1h-1zM13 6h1v1h-1zM18 6h1v1h-1zM22 6h1v1h-1zM12 7h4v1h-4zM17 7h1v1h-1zM19 7h1v1h-1zM21 7h1v1h-1zM16 8h2v1h-2zM20 8h1v1h-1zM14 9h2v1h-2zM17 9h1v1h-1zM19 9h1v1h-1zM21 9h1v1h-1zM12 10h2v1h-2zM16 10h1v1h-1zM18 10h1v1h-1zM22 10h1v1h-1zM25 0h1v1h-1zM29 0h4v1h-4zM26 1h1v1h-1zM29 1h1v1h-1zM32 1h1v1h-1zM29 2h1v1h-1zM32 2h1v1h-1zM28 3h1v1h-1zM32 3h3v1h-3zM24 4h3v1h-3zM26 5h1v1h-1zM28 5h6v1h-6zM26 6h1v1h-1zM29 6h1v1h-1zM33 6h1v1h-1zM26 7h1v1h-1zM30 7h1v1h-1zM32 7h1v1h-1zM26 8h2v1h-2zM31 8h1v1h-1zM26 9h1v1h-1zM30 9h1v1h-1zM32 9h1v1h-1zM27 10h3v1h-3zM33 10h2v1h-2zM41 0h1v1h-1zM37 1h10v1h-10zM37 2h1v1h-1zM46 2h1v1h-1zM36 3h1v1h-1zM45 3h1v1h-1zM38 4h8v1h-8zM41 5h1v1h-1zM38 6h1v1h-1zM41 6h1v1h-1zM38 7h1v1h-1zM41 7h4v1h-4zM38 8h1v1h-1zM41 8h1v1h-1zM37 9h1v1h-1zM39 9h1v1h-1zM41 9h1v1h-1zM36 10h1v1h-1zM40 10h7v1h-7z"/></svg></div>


</body></html>
